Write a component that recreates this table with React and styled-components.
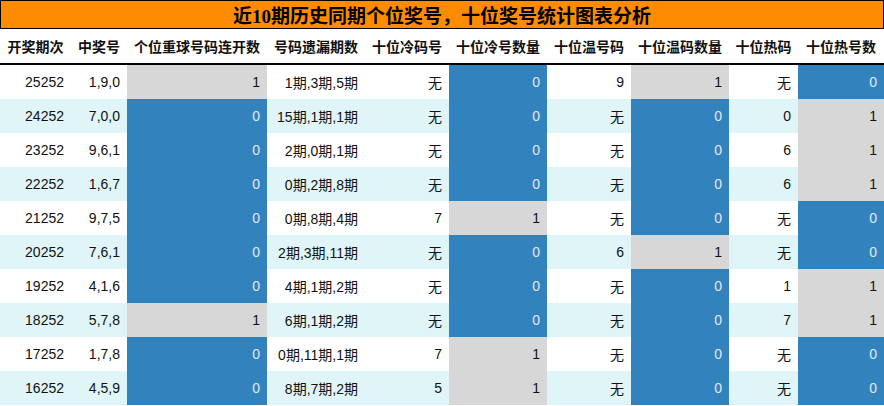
import React from 'react'
import styled, { createGlobalStyle } from 'styled-components'

const GlobalStyle = createGlobalStyle`
  html, body {
    margin: 0;
    padding: 0;
    background: #ffffff;
  }
  body {
    font-family: "Liberation Sans", "Noto Sans CJK SC", sans-serif;
    color: #111;
  }
`;

const columns = [
    { title: '开奖期次', width: 71 },
    { title: '中奖号', width: 56 },
    { title: '个位重球号码连开数', width: 140 },
    { title: '号码遗漏期数', width: 98 },
    { title: '十位冷码号', width: 84 },
    { title: '十位冷号数量', width: 98 },
    { title: '十位温号码', width: 84 },
    { title: '十位温码数量', width: 98 },
    { title: '十位热码', width: 69 },
    { title: '十位热号数', width: 86 },
]

// count columns get coloured by value
const countCols = [2, 5, 7, 9]

const rows = [
    ['25252', '1,9,0', 1, '1期,3期,5期', '无', 0, '9', 1, '无', 0],
    ['24252', '7,0,0', 0, '15期,1期,1期', '无', 0, '无', 0, '0', 1],
    ['23252', '9,6,1', 0, '2期,0期,1期', '无', 0, '无', 0, '6', 1],
    ['22252', '1,6,7', 0, '0期,2期,8期', '无', 0, '无', 0, '6', 1],
    ['21252', '9,7,5', 0, '0期,8期,4期', '7', 1, '无', 0, '无', 0],
    ['20252', '7,6,1', 0, '2期,3期,11期', '无', 0, '6', 1, '无', 0],
    ['19252', '4,1,6', 0, '4期,1期,2期', '无', 0, '无', 0, '1', 1],
    ['18252', '5,7,8', 1, '6期,1期,2期', '无', 0, '无', 0, '7', 1],
    ['17252', '1,7,8', 0, '0期,11期,1期', '7', 1, '无', 0, '无', 0],
    ['16252', '4,5,9', 0, '8期,7期,2期', '5', 1, '无', 0, '无', 0],
]

function App() {
    return (
        <>
            <GlobalStyle />
            <Wrapper>
                <Title>近10期历史同期个位奖号，十位奖号统计图表分析</Title>
                <Table>
                    <colgroup>
                        {columns.map((c) => <col key={c.title} style={{ width: c.width }} />)}
                    </colgroup>
                    <thead>
                        <tr>
                            {columns.map((c) => <Th key={c.title}>{c.title}</Th>)}
                        </tr>
                    </thead>
                    <tbody>
                        {rows.map((row, i) => (
                            <Row key={row[0]} $striped={i % 2 === 1}>
                                {row.map((val, j) => {
                                    let tone = null
                                    if (countCols.includes(j)) tone = val > 0 ? 'grey' : 'blue'
                                    return <Td key={j} $tone={tone}>{val}</Td>
                                })}
                            </Row>
                        ))}
                    </tbody>
                </Table>
            </Wrapper>
        </>
    )
}

const Wrapper = styled.div`
    width: 884px;
`;

const Title = styled.div`
    box-sizing: border-box;
    height: 29px;
    border: 1px solid #000;
    background: #ff8c00;
    display: flex;
    align-items: center;
    justify-content: center;
    font-family: "Liberation Serif", "Noto Sans CJK SC", serif;
    font-weight: 700;
    font-size: 19px;
    color: #000;
`;

const Table = styled.table`
    width: 884px;
    border-collapse: collapse;
    table-layout: fixed;
    border-spacing: 0;
`;

const Th = styled.th`
    height: 34px;
    padding: 0;
    border-bottom: 2px solid #000;
    font-size: 14px;
    font-weight: 700;
    color: #111;
    text-align: center;
    white-space: nowrap;
    background: #fff;
`;

const Row = styled.tr`
    background: ${props => props.$striped ? '#dff5f8' : '#ffffff'};
`;

const toneBg = { grey: '#d7d7d7', blue: '#3182bd' }

const Td = styled.td`
    height: 34px;
    padding: 0 7px 0 0;
    font-size: 14px;
    text-align: right;
    white-space: nowrap;
    background: ${props => props.$tone ? toneBg[props.$tone] : 'transparent'};
    color: ${props => props.$tone === 'blue' ? '#e4e8ee' : '#111'};
`;

export default App
